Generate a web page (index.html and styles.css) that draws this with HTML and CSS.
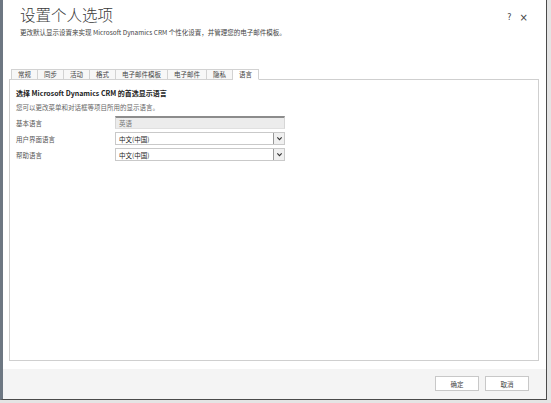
FILE: index.html
```html
<!DOCTYPE html>
<html lang="zh-CN">
<head>
<meta charset="utf-8">
<title>设置个人选项</title>
<link rel="stylesheet" href="styles.css">
</head>
<body>
<div class="dialog">
  <header class="head">
    <div class="titles">
      <h1 class="title">设置个人选项</h1>
      <p class="subtitle">更改默认显示设置来实现 Microsoft Dynamics CRM 个性化设置，并管理您的电子邮件模板。</p>
    </div>
    <div class="head-icons">
      <span class="icon-help">?</span>
      <span class="icon-close">×</span>
    </div>
  </header>
  <div class="main">
    <ul class="tabs">
      <li class="tab">常规</li>
      <li class="tab">同步</li>
      <li class="tab">活动</li>
      <li class="tab">格式</li>
      <li class="tab">电子邮件模板</li>
      <li class="tab">电子邮件</li>
      <li class="tab">隐私</li>
      <li class="tab active">语言</li>
    </ul>
    <section class="panel">
      <h2 class="panel-title">选择 Microsoft Dynamics CRM 的首选显示语言</h2>
      <p class="panel-desc">您可以更改菜单和对话框等项目所用的显示语言。</p>
      <div class="form">
        <div class="row">
          <span class="label">基本语言</span>
          <div class="field readonly">英语</div>
        </div>
        <div class="row">
          <span class="label">用户界面语言</span>
          <div class="field select"><span class="val">中文(中国)</span><span class="arrow"><svg viewBox="0 0 8 8" width="7" height="7"><path d="M1.5 2.8 L4 5.3 L6.5 2.8" fill="none" stroke="#333" stroke-width="1.3"/></svg></span></div>
        </div>
        <div class="row">
          <span class="label">帮助语言</span>
          <div class="field select"><span class="val">中文(中国)</span><span class="arrow"><svg viewBox="0 0 8 8" width="7" height="7"><path d="M1.5 2.8 L4 5.3 L6.5 2.8" fill="none" stroke="#333" stroke-width="1.3"/></svg></span></div>
        </div>
      </div>
    </section>
  </div>
  <footer class="foot">
    <button class="btn">确定</button>
    <button class="btn">取消</button>
  </footer>
</div>
</body>
</html>
```
FILE: styles.css
```css
html, body {
  margin: 0;
  padding: 0;
}
body {
  width: 551px;
  height: 403px;
  background: #e4e4e4;
  font-family: "Noto Sans CJK SC", "Noto Sans", sans-serif;
  color: #444;
  overflow: hidden;
}
.dialog {
  box-sizing: border-box;
  width: 547px;
  height: 400px;
  background: #fff;
  border-left: 3px solid #6d7782;
  border-right: 1px solid #4a4a4a;
  border-bottom: 1px solid #4a4a4a;
  display: flex;
  flex-direction: column;
}
.head {
  height: 69px;
  box-sizing: border-box;
  padding: 5px 18px 0 17px;
  display: flex;
  justify-content: space-between;
  align-items: flex-start;
}
.title {
  margin: 0;
  font-size: 15.5px;
  line-height: 18px;
  font-weight: 300;
  color: #3a3a3a;
}
.subtitle {
  margin: 5px 0 0;
  font-size: 6.5px;
  line-height: 8px;
  color: #444;
}
.head-icons {
  display: flex;
  gap: 8px;
  padding-top: 8px;
  font-family: "DejaVu Sans", sans-serif;
  font-size: 8px;
  line-height: 10px;
  color: #444;
}
.icon-close {
  font-size: 10px;
}
.main {
  margin: 0 7px 0 6px;
  height: 292px;
  display: flex;
  flex-direction: column;
}
.tabs {
  list-style: none;
  margin: 0 0 0 2px;
  padding: 0;
  display: flex;
  height: 10px;
  position: relative;
  z-index: 1;
}
.tab {
  box-sizing: border-box;
  height: 11px;
  padding: 0 6px;
  font-size: 6.5px;
  line-height: 9px;
  color: #444;
  background: #f7f7f7;
  border: 1px solid #d2d2d2;
  border-left: none;
}
.tab:first-child {
  border-left: 1px solid #d2d2d2;
}
.tab.active {
  background: #fff;
  border-bottom-color: #fff;
}
.panel {
  box-sizing: border-box;
  height: 282px;
  border: 1px solid #cfcfcf;
  padding: 8px 6px 0 6px;
}
.panel-title {
  margin: 0;
  font-size: 7px;
  line-height: 10px;
  font-weight: 700;
  color: #222;
}
.panel-desc {
  margin: 5px 0 0;
  font-size: 6.5px;
  line-height: 8px;
  color: #666;
}
.form {
  margin-top: 5px;
  display: flex;
  flex-direction: column;
  gap: 3px;
}
.row {
  display: flex;
  align-items: center;
  height: 13px;
}
.label {
  width: 99px;
  font-size: 6.5px;
  line-height: 8px;
  color: #555;
}
.field {
  box-sizing: border-box;
  width: 170px;
  height: 13px;
  font-size: 6.5px;
  line-height: 10px;
  padding-left: 3px;
}
.field.readonly {
  background: #ececec;
  border-top: 2px solid #8c8c8c;
  border-left: 1px solid #d6d6d6;
  border-right: 1px solid #d6d6d6;
  border-bottom: 1px solid #e0e0e0;
  color: #777;
}
.field.select {
  display: flex;
  align-items: center;
  justify-content: space-between;
  border: 1px solid #c9c9c9;
  background: #fff;
  color: #222;
  padding-right: 0;
}
.arrow {
  box-sizing: border-box;
  width: 11px;
  height: 11px;
  border-left: 1px solid #999;
  background: #f0f0f0;
  display: flex;
  align-items: center;
  justify-content: center;
}
.foot {
  margin-top: 8px;
  flex: 1;
  background: #f4f4f4;
  display: flex;
  justify-content: flex-end;
  align-items: flex-start;
  gap: 6px;
  padding: 7px 17px 0 0;
}
.btn {
  box-sizing: border-box;
  width: 44px;
  height: 15px;
  background: #fff;
  border: 1px solid #c8c8c8;
  font-family: "Noto Sans CJK SC", sans-serif;
  font-size: 6.5px;
  line-height: 12px;
  color: #444;
  padding: 0;
}
```
